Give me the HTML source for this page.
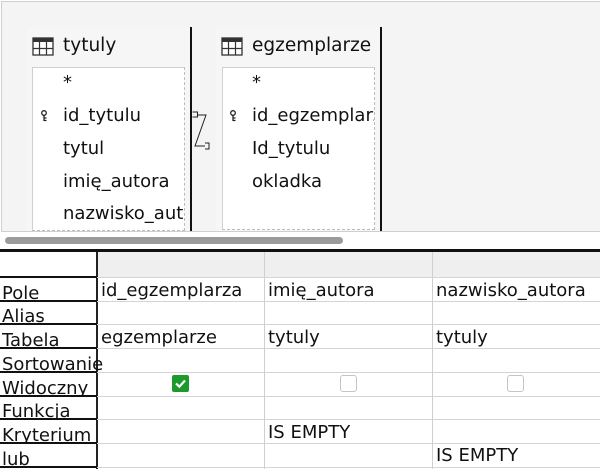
<!DOCTYPE html>
<html><head><meta charset="utf-8"><style>
*{margin:0;padding:0;box-sizing:border-box}
body{width:600px;height:469px;background:#fff;font-family:"DejaVu Sans","Liberation Sans",sans-serif;position:relative;overflow:hidden;color:#111}
.abs{position:absolute}
#top{left:1px;top:1px;width:600px;height:231px;background:#f4f4f4;border:1px solid #cfcfcf}
.win{background:#f6f6f6}
.list{background:#fff;border:1px solid #d0d0d0;border-right:1px dashed #bbb;border-bottom:1px dashed #bbb;overflow:hidden}
.t{font-size:18.5px;white-space:nowrap}
.f{font-size:18px;white-space:nowrap}
.vl{width:2px;background:#111}
.row{left:0;width:600px;height:1px;background:#d4d4d4}
.lbl{left:0;width:97px;height:2px;background:#111}
.cl{width:1px;background:#cfcfcf}
.cell{font-size:18px;white-space:nowrap}
.lab{font-size:18px;white-space:nowrap;height:19px;overflow:hidden}
</style></head><body>
<div id="top" class="abs"></div>
<div class="abs win" style="left:27px;top:28px;width:163px;height:203px"></div>
<svg class="abs" style="left:32px;top:37px" width="22" height="20"><rect x="1" y="1" width="20" height="17" fill="#fff" stroke="#333" stroke-width="1.3"/><rect x="1" y="1" width="20" height="4" fill="#333"/><path d="M7.5 5V18M14.5 5V18M1 11.5H21" stroke="#333" stroke-width="1.2"/></svg>
<div class="abs t" style="left:63px;top:35px">tytuly</div>
<div class="abs list" style="left:32px;top:67px;width:153px;height:164px"></div>
<div class="abs f" style="left:63px;top:72px">*</div>
<svg class="abs" style="left:40px;top:110px" width="10" height="12"><circle cx="4" cy="3" r="2.3" fill="none" stroke="#222" stroke-width="1.3"/><path d="M4 5V11M4 8H6.5M4 10.5H6.5" stroke="#222" stroke-width="1.3"/></svg>
<div class="abs f" style="left:63px;top:105px">id_tytulu</div>
<div class="abs f" style="left:63px;top:138px">tytul</div>
<div class="abs f" style="left:63px;top:171px">imię_autora</div>
<div class="abs f" style="left:63px;top:203px;width:121px;overflow:hidden">nazwisko_autora</div>
<div class="abs vl" style="left:190px;top:27px;height:204px"></div>
<div class="abs win" style="left:216px;top:28px;width:165px;height:203px"></div>
<svg class="abs" style="left:221px;top:37px" width="22" height="20"><rect x="1" y="1" width="20" height="17" fill="#fff" stroke="#333" stroke-width="1.3"/><rect x="1" y="1" width="20" height="4" fill="#333"/><path d="M7.5 5V18M14.5 5V18M1 11.5H21" stroke="#333" stroke-width="1.2"/></svg>
<div class="abs t" style="left:252px;top:35px">egzemplarze</div>
<div class="abs list" style="left:222px;top:67px;width:153px;height:163px"></div>
<div class="abs f" style="left:252px;top:72px">*</div>
<svg class="abs" style="left:229px;top:110px" width="10" height="12"><circle cx="4" cy="3" r="2.3" fill="none" stroke="#222" stroke-width="1.3"/><path d="M4 5V11M4 8H6.5M4 10.5H6.5" stroke="#222" stroke-width="1.3"/></svg>
<div class="abs f" style="left:252px;top:105px;width:122px;overflow:hidden">id_egzemplarza</div>
<div class="abs f" style="left:252px;top:138px">Id_tytulu</div>
<div class="abs f" style="left:252px;top:171px">okladka</div>
<div class="abs vl" style="left:380px;top:27px;height:204px"></div>
<svg class="abs" style="left:192px;top:108px" width="24" height="45"><path d="M0.5 4H5.5V9H0.5M5 7H14L3 38H13M13 35H17V41H13" fill="none" stroke="#222" stroke-width="1"/></svg>
<div class="abs" style="left:5px;top:237px;width:338px;height:7px;border-radius:4px;background:#9b9b9b"></div>
<div class="abs" style="left:0;top:249px;width:600px;height:3px;background:#111"></div>
<div class="abs" style="left:97px;top:252px;width:503px;height:25px;background:#efefef"></div>
<div class="abs" style="left:96px;top:252px;width:2px;height:217px;background:#222"></div>
<div class="abs cl" style="left:264px;top:252px;height:217px"></div>
<div class="abs cl" style="left:432px;top:252px;height:217px"></div>
<div class="abs row" style="top:277px"></div>
<div class="abs row" style="top:301px"></div>
<div class="abs row" style="top:324px"></div>
<div class="abs row" style="top:348px"></div>
<div class="abs row" style="top:372px"></div>
<div class="abs row" style="top:396px"></div>
<div class="abs row" style="top:419px"></div>
<div class="abs row" style="top:443px"></div>
<div class="abs row" style="top:467px"></div>
<div class="abs lab" style="left:2px;top:283px">Pole</div>
<div class="abs lab" style="left:2px;top:306px">Alias</div>
<div class="abs lab" style="left:2px;top:330px">Tabela</div>
<div class="abs lab" style="left:2px;top:354px">Sortowanie</div>
<div class="abs lab" style="left:2px;top:378px">Widoczny</div>
<div class="abs lab" style="left:2px;top:401px">Funkcja</div>
<div class="abs lab" style="left:2px;top:425px">Kryterium</div>
<div class="abs lab" style="left:2px;top:449px">lub</div>
<div class="abs lbl" style="top:276px"></div>
<div class="abs lbl" style="top:300px"></div>
<div class="abs lbl" style="top:323px"></div>
<div class="abs lbl" style="top:347px"></div>
<div class="abs lbl" style="top:371px"></div>
<div class="abs lbl" style="top:395px"></div>
<div class="abs lbl" style="top:418px"></div>
<div class="abs lbl" style="top:442px"></div>
<div class="abs lbl" style="top:466px"></div>
<div class="abs cell" style="left:101px;top:280px">id_egzemplarza</div>
<div class="abs cell" style="left:268px;top:280px">imię_autora</div>
<div class="abs cell" style="left:436px;top:280px">nazwisko_autora</div>
<div class="abs cell" style="left:101px;top:327px">egzemplarze</div>
<div class="abs cell" style="left:268px;top:327px">tytuly</div>
<div class="abs cell" style="left:436px;top:327px">tytuly</div>
<svg class="abs" style="left:171px;top:374px" width="20" height="20"><rect x="1" y="1" width="17" height="17" rx="2" fill="#1e9a2c"/><path d="M5 9.5L8.3 12.7L14 6.5" fill="none" stroke="#fff" stroke-width="2.2"/></svg>
<div class="abs" style="left:340px;top:375px;width:17px;height:17px;border:1px solid #c4c4c4;border-radius:3px"></div>
<div class="abs" style="left:507px;top:375px;width:17px;height:17px;border:1px solid #c4c4c4;border-radius:3px"></div>
<div class="abs cell" style="left:268px;top:422px">IS EMPTY</div>
<div class="abs cell" style="left:436px;top:445px">IS EMPTY</div>
</body></html>
